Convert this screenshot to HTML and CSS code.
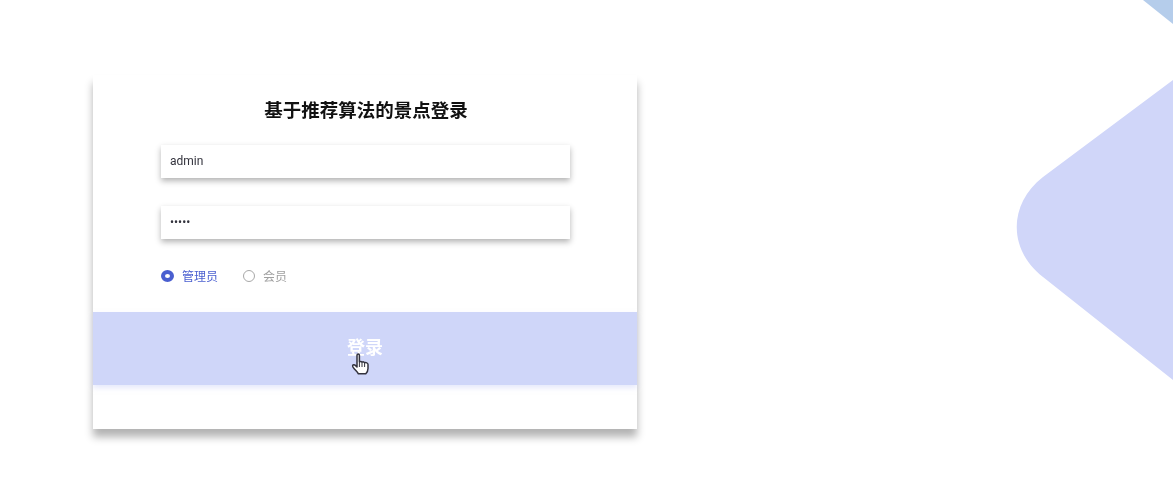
FILE: index.html
```html
<!DOCTYPE html>
<html lang="zh-CN">
<head>
    <meta charset="UTF-8">
    <meta name="viewport" content="width=device-width, initial-scale=1.0">
    <title>基于推荐算法的景点登录</title>
    <link rel="stylesheet" href="styles.css">
</head>
<body>
    <!-- background shapes -->
    <svg class="bg-shapes" width="1173" height="484" viewBox="0 0 1173 484">
        <path d="M1143 0 L1173 24 L1173 0 Z" fill="#b5cdeb"/>
        <path d="M1173 80 L1043 177 C1008 204 1008 250 1043 277 L1173 380 Z" fill="#d0d6f9"/>
    </svg>

    <div class="login-container">
        <h1>基于推荐算法的景点登录</h1>
        <form class="login-form" onsubmit="return false">
            <input class="text-input" type="text" value="admin">
            <input class="text-input" type="password" value="admin">
            <div class="role-group">
                <label class="role role-active"><span class="role-dot"></span>管理员</label>
                <label class="role"><span class="role-dot"></span>会员</label>
            </div>
        </form>
        <button class="btn-login" type="button">登录</button>
    </div>

    <!-- mouse pointer -->
    <svg class="hand-cursor" width="20" height="24" viewBox="0 0 20 24">
        <path d="M6 2.2 C6 0.7 8.4 0.7 8.4 2.2 L8.4 8.8 C9.4 8.2 10.6 8.3 11 9.2 C12 8.6 13.2 8.8 13.6 9.8 C14.8 9.3 17 9.9 17 11.4 L17 15.6 C17 18.2 16 19.6 14.8 20.8 L7.4 20.8 C6.6 19.2 5.2 18 3.6 16.2 C2.4 14.8 1.2 13.6 1.6 12.6 C2.1 11.4 3.6 11.6 4.6 12.6 L6 14 Z" fill="#fff" stroke="#33333f" stroke-width="1.5" stroke-linejoin="round"/>
        <path d="M8.4 9 V14 M11 9.4 V14 M13.6 10 V14" fill="none" stroke="#33333f" stroke-width="1"/>
    </svg>
</body>
</html>
```

FILE: styles.css
```css
body {
    font-family: Roboto, "Noto Sans CJK SC", sans-serif;
    margin: 0;
    padding: 75px 0 0 93px;
    height: 484px;
    box-sizing: border-box;
    background-color: #ffffff;
    overflow: hidden;
    position: relative;
    filter: blur(0.4px);
}

.bg-shapes {
    position: absolute;
    left: 0;
    top: 0;
}

.login-container {
    position: relative;
    width: 544px;
    height: 354px;
    background-color: #ffffff;
    box-shadow: 0 8px 8px rgba(0, 0, 0, 0.3);
}

.login-container h1 {
    margin: 0;
    padding: 21px 0 0 2px;
    text-align: center;
    font-family: "Noto Sans CJK SC", sans-serif;
    font-size: 18.5px;
    line-height: 26px;
    font-weight: 700;
    color: #111111;
}

.login-form {
    display: flex;
    flex-direction: column;
    align-items: flex-start;
    gap: 28px;
    padding: 23px 68px 0;
}

.text-input {
    width: 409px;
    height: 33px;
    padding: 0 9px 2px;
    border: none;
    outline: none;
    box-sizing: border-box;
    background-color: #ffffff;
    box-shadow: 0 3px 6px rgba(0, 0, 0, 0.3);
    font-family: Roboto, sans-serif;
    font-size: 12px;
    color: #33333d;
}

.role-group {
    display: flex;
    gap: 25px;
    margin-top: 1px;
}

.role {
    display: flex;
    align-items: center;
    gap: 8px;
    font-family: "Noto Sans CJK SC", sans-serif;
    font-size: 12px;
    line-height: 16px;
    color: #a0a0a0;
}

.role-dot {
    width: 10px;
    height: 10px;
    border: 1px solid #a8a8a8;
    border-radius: 50%;
}

.role-active {
    color: #4a5fd0;
}

.role-active .role-dot {
    width: 5px;
    height: 4px;
    border: 4px solid #4a5fd0;
    background-color: #ffffff;
}

.btn-login {
    display: block;
    width: 100%;
    height: 73px;
    margin-top: 28px;
    border: none;
    padding: 0 0 6px;
    background-color: #cfd6f9;
    box-shadow: 0 3px 5px rgba(207, 214, 249, 0.5);
    color: #ffffff;
    font-family: "Noto Sans CJK SC", sans-serif;
    font-size: 18px;
    font-weight: 700;
    cursor: pointer;
}

.hand-cursor {
    position: absolute;
    left: 351px;
    top: 353px;
}
```
